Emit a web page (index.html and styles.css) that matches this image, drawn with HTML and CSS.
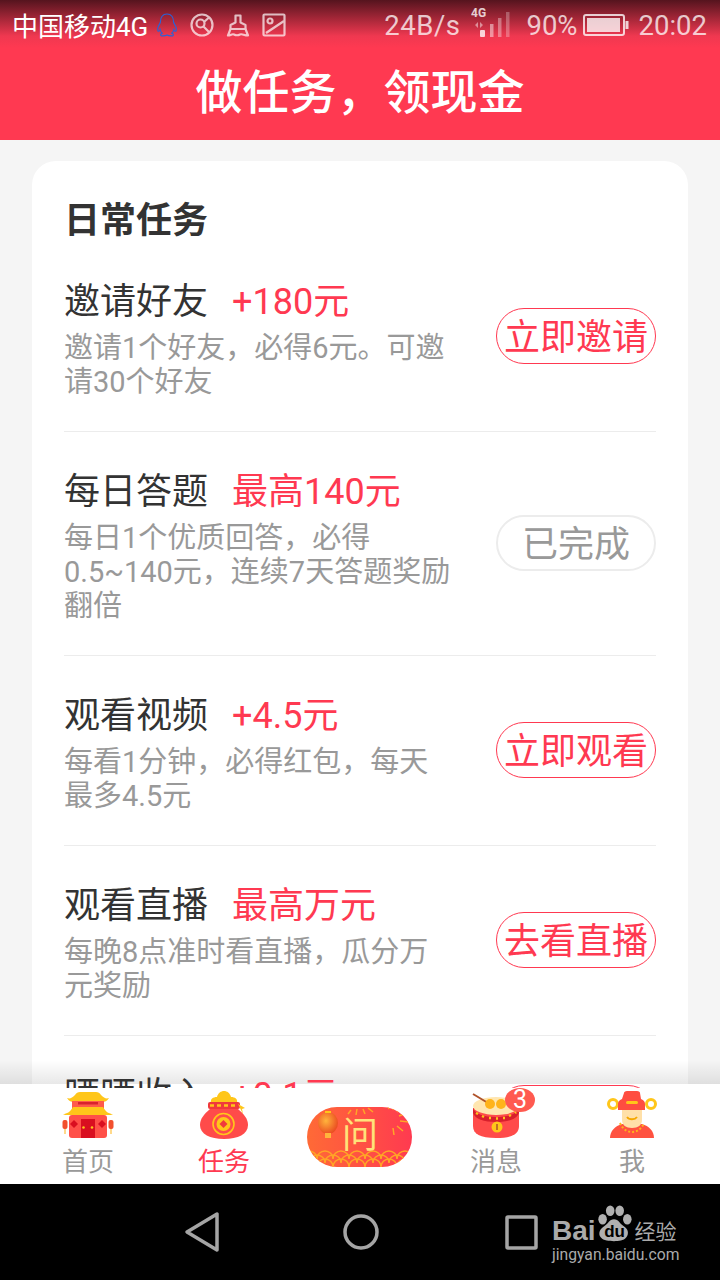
FILE: index.html
```html
<!DOCTYPE html>
<html lang="zh-CN">
<head>
    <meta charset="UTF-8">
    <meta name="viewport" content="width=device-width, initial-scale=1.0">
    <title>做任务，领现金</title>
    <link rel="stylesheet" href="styles.css">
</head>
<body>
    <header class="top">
        <div class="status">
            <div class="status-left">
                <span class="carrier">中国移动4G</span>
                <svg class="ic-qq" width="22" height="24" viewBox="0 0 22 24"><path d="M11 1C6.500 1 4.500 4.500 4.500 8.500C4.500 10 3.500 11 2.500 13C1.500 15 1.300 18 2.300 18.300C3 18.500 3.800 17.300 4.200 16.500C4.500 18 5.200 19.300 6.200 20.200C5 20.800 4.300 21.500 4.800 22.300C5.400 23.200 9 23 11 22C13 23 16.600 23.200 17.200 22.300C17.700 21.500 17 20.800 15.800 20.200C16.800 19.300 17.500 18 17.800 16.500C18.200 17.300 19 18.500 19.700 18.300C20.700 18 20.500 15 19.500 13C18.500 11 17.500 10 17.500 8.500C17.500 4.500 15.500 1 11 1Z" fill="none" stroke="#2b62d6" stroke-width="1.200"/></svg>
                <svg class="ic-dim" width="24" height="24" viewBox="0 0 24 24" fill="none" stroke="#fff" stroke-width="2.200"><circle cx="12" cy="12" r="10.500"/><circle cx="10.500" cy="10.500" r="4"/><path d="M13.500 13.500L19 19M14 9L19 4.500"/></svg>
                <svg class="ic-dim" width="24" height="24" viewBox="0 0 24 24" fill="none" stroke="#fff" stroke-width="2.200" stroke-linejoin="round"><path d="M9.500 2.500h5v7l5 2.500v4H4.500v-4l5-2.500z"/><path d="M4.500 16L2 22.500c3 0 4-2 6-1s4 1 6 0 4 1 8 1L19.500 16"/></svg>
                <svg class="ic-dim" width="24" height="24" viewBox="0 0 24 24" fill="none" stroke="#fff" stroke-width="2.200"><rect x="1.500" y="1.500" width="21" height="21" rx="1"/><circle cx="8" cy="8" r="2.500"/><path d="M4 20L22 8"/></svg>
            </div>
            <div class="status-right">
                <span class="speed">24B/s</span>
                <svg class="signal" width="40" height="32" viewBox="0 0 40 32" fill="#fff">
                    <text x="1" y="12" class="signal-text">4G</text>
                    <path d="M5 20l3-3v6zM10 23l3-3-3-3z" opacity=".6"/>
                    <rect x="10" y="25" width="5" height="7" rx="1"/>
                    <rect x="20" y="19" width="3.500" height="13" opacity=".6"/>
                    <rect x="28" y="13" width="3.500" height="19" opacity=".45"/>
                    <rect x="36" y="7" width="3.500" height="25" opacity=".35"/>
                </svg>
                <span class="batt-pct">90%</span>
                <svg width="46" height="22" viewBox="0 0 46 22" fill="none"><rect x="1" y="1" width="40" height="20" rx="2" stroke="#fff" stroke-width="2"/><rect x="4" y="4" width="33" height="14" fill="#fff"/><rect x="42.500" y="7" width="3" height="8" fill="#fff"/></svg>
                <span class="time">20:02</span>
            </div>
        </div>
        <h1 class="page-title">做任务，领现金</h1>
    </header>

    <main class="content">
        <section class="card">
            <h2 class="card-title">日常任务</h2>

            <div class="task">
                <div class="task-info">
                    <div class="task-head"><span class="task-name">邀请好友</span><span class="task-reward">+180元</span></div>
                    <p class="task-desc">邀请1个好友，必得6元。可邀请30个好友</p>
                </div>
                <button class="task-btn">立即邀请</button>
            </div>

            <div class="task">
                <div class="task-info">
                    <div class="task-head"><span class="task-name">每日答题</span><span class="task-reward">最高140元</span></div>
                    <p class="task-desc">每日1个优质回答，必得0.5~140元，连续7天答题奖励翻倍</p>
                </div>
                <button class="task-btn done">已完成</button>
            </div>

            <div class="task">
                <div class="task-info">
                    <div class="task-head"><span class="task-name">观看视频</span><span class="task-reward">+4.5元</span></div>
                    <p class="task-desc">每看1分钟，必得红包，每天最多4.5元</p>
                </div>
                <button class="task-btn">立即观看</button>
            </div>

            <div class="task">
                <div class="task-info">
                    <div class="task-head"><span class="task-name">观看直播</span><span class="task-reward">最高万元</span></div>
                    <p class="task-desc">每晚8点准时看直播，瓜分万元奖励</p>
                </div>
                <button class="task-btn">去看直播</button>
            </div>

            <div class="task task-cut">
                <div class="task-info">
                    <div class="task-head"><span class="task-name">晒晒收入</span><span class="task-reward">+0.1元</span></div>
                    <p class="task-desc"></p>
                </div>
                <button class="task-btn"></button>
            </div>
        </section>
    </main>

    <nav class="tabbar">
        <a class="tab">
            <svg class="tab-icon" width="56" height="50" viewBox="0 0 56 50">
                <path d="M7 8c3 1 5 0 8-3 1-2 3-3 5-3h16c2 0 4 1 5 3 3 3 5 4 8 3-2 3-4 4-7 4H14c-3 0-5-1-7-4z" fill="#ffc61a"/>
                <rect x="12" y="11" width="32" height="8" fill="#ff5a4a"/>
                <rect x="18" y="12" width="20" height="2.500" fill="#d8222c"/>
                <path d="M3 24c4 0 7-2 10-7h30c3 5 6 7 10 7-1 1-3 1-5 1H8c-2 0-4 0-5-1z" fill="#ffc61a"/>
                <rect x="9" y="25" width="38" height="23" rx="3" fill="#ff5049"/>
                <rect x="21" y="29" width="14" height="19" fill="#d90f20"/>
                <circle cx="23.500" cy="37.500" r="1.300" fill="#ffc61a"/>
                <circle cx="32" cy="37.500" r="1.300" fill="#ffc61a"/>
                <path d="M14 30l4 4-4 4-4-4zM42 30l4 4-4 4-4-4z" fill="#d90f20"/>
                <rect x="2.500" y="30" width="5" height="9" rx="2" fill="#f2502e"/>
                <rect x="48.500" y="30" width="5" height="9" rx="2" fill="#f2502e"/>
                <path d="M5 39v5M51 39v5" stroke="#ffd98a" stroke-width="2"/>
            </svg>
            <span>首页</span>
        </a>
        <a class="tab active">
            <svg class="tab-icon" width="56" height="50" viewBox="0 0 56 50">
                <path d="M15 13c-1-4 2-6 6-6 1-4 4-6 7-6s6 2 7 6c4 0 7 2 6 6z" fill="#ffc61a"/>
                <path d="M14 19C8 24 4 29 4 35c0 9 10 14 24 14s24-5 24-14c0-6-4-11-10-16z" fill="#ff4b4a"/>
                <rect x="12" y="12" width="32" height="7" rx="2" fill="#f03a3c"/>
                <path d="M14 15.500h4M21 15.500h4M28 15.500h4M35 15.500h4" stroke="#ffc61a" stroke-width="2.500"/>
                <path d="M42 14l7 4-3 1 1 5z" fill="#ffc61a"/>
                <circle cx="27.500" cy="34" r="10.500" fill="none" stroke="#ffc61a" stroke-width="1.600"/>
                <circle cx="27.500" cy="34" r="7" fill="#ffc61a"/>
                <path d="M27.500 30l4 4-4 4-4-4z" fill="#f03a3c"/>
            </svg>
            <span>任务</span>
        </a>
        <a class="tab tab-ask">
            <svg width="105" height="60" viewBox="0 0 105 60">
                <defs>
                    <linearGradient id="askBg" x1="0" y1="0" x2="1" y2="0"><stop offset="0" stop-color="#ff6a36"/><stop offset="1" stop-color="#ff3a50"/></linearGradient>
                    <radialGradient id="lantern" cx=".4" cy=".4" r=".7"><stop offset="0" stop-color="#ffb43c"/><stop offset="1" stop-color="#e8401e"/></radialGradient>
                    <clipPath id="askClip"><rect width="105" height="60" rx="30"/></clipPath>
                </defs>
                <rect width="105" height="60" rx="30" fill="url(#askBg)"/>
                <g clip-path="url(#askClip)" fill="none" stroke="#ffa526" stroke-width="1.500">
                    <path d="M-6 60a8 8 0 0 1 16 0a8 8 0 0 1 16 0a8 8 0 0 1 16 0a8 8 0 0 1 16 0a8 8 0 0 1 16 0a8 8 0 0 1 16 0a8 8 0 0 1 16 0"/>
                    <path d="M2 60a8 8 0 0 1 16 0a8 8 0 0 1 16 0a8 8 0 0 1 16 0a8 8 0 0 1 16 0a8 8 0 0 1 16 0a8 8 0 0 1 16 0" transform="translate(0 -4)"/>
                    <path d="M-6 60a8 8 0 0 1 16 0a8 8 0 0 1 16 0a8 8 0 0 1 16 0a8 8 0 0 1 16 0a8 8 0 0 1 16 0a8 8 0 0 1 16 0a8 8 0 0 1 16 0" transform="translate(0 -8)"/>
                    <path d="M82 2l-2-5M86 3l2-6M90 5l5-5M92 9l8-3M93 14l9 1M90 19l6 5M86 21l1 7M44 3l-3 4M50 2l-1 6M56 2l2 5M61 1l5 4"/>
                </g>
                <ellipse cx="21" cy="16" rx="10" ry="11" fill="url(#lantern)"/>
                <rect x="18" y="4" width="6" height="2" fill="#ffc61a"/>
                <rect x="18" y="26" width="6" height="5" fill="#ffb43c"/>
                <text x="53" y="41" class="ask-text">问</text>
            </svg>
        </a>
        <a class="tab">
            <svg class="tab-icon" width="56" height="50" viewBox="0 0 56 50">
                <path d="M5 18h46v18c0 8-7 12-23 12S5 44 5 36z" fill="#ff4b4a"/>
                <ellipse cx="28" cy="16" rx="23" ry="9" fill="#ffe6b0"/>
                <path d="M5 18c2 6 11 9 23 9s21-3 23-9v5c-2 6-11 9-23 9S7 29 5 23z" fill="#d81f2c"/>
                <path d="M8 23l2 1M14 26l2 1M21 28h2M28 28.500h2M35 28h2M41 26l2-1M47 23l1-1" stroke="#ffc61a" stroke-width="2.500"/>
                <path d="M5 4l15 9" stroke="#b0532a" stroke-width="2"/>
                <circle cx="22" cy="14" r="5" fill="#ffb31a"/>
                <circle cx="33" cy="14" r="5" fill="#ffb31a"/>
                <circle cx="29" cy="37" r="5.500" fill="#ffc61a"/>
                <path d="M29 34v6" stroke="#b0532a" stroke-width="1.500"/>
            </svg>
            <span>消息</span>
            <i class="badge">3</i>
        </a>
        <a class="tab">
            <svg class="tab-icon" width="56" height="50" viewBox="0 0 56 50">
                <circle cx="9" cy="14" r="4.500" fill="none" stroke="#ffc61a" stroke-width="3"/>
                <circle cx="47" cy="14" r="4.500" fill="none" stroke="#ffc61a" stroke-width="3"/>
                <path d="M6 48c0-7 5-12 12-14h20c7 2 12 7 12 14z" fill="#ff5240"/>
                <path d="M16 33c3 7 8 9 12 9s9-2 12-9" fill="none" stroke="#ffb31a" stroke-width="2" stroke-dasharray="2 2"/>
                <path d="M18 18h20v12c0 5-4 8-10 8s-10-3-10-8z" fill="#ffe0a8"/>
                <path d="M23 27c2 3 8 3 10 0" fill="none" stroke="#f5a800" stroke-width="1.800"/>
                <path d="M20 3c0-1 1-2 3-2h10c2 0 3 1 3 2l1 6c3 1 4 3 4 5v6H14v-6c0-2 1-4 4-5z" fill="#ff4d40"/>
                <rect x="22" y="11" width="12" height="3" rx="1.500" fill="#ffc61a"/>
            </svg>
            <span>我</span>
        </a>
    </nav>

    <footer class="navbar">
        <svg width="160" height="44" viewBox="0 0 160 44" fill="none" stroke="#a5a5a5" stroke-width="3.500" stroke-linejoin="round"><path d="M96 4v36L66 22z"/></svg>
        <svg width="160" height="44" viewBox="0 0 160 44" fill="none" stroke="#a5a5a5" stroke-width="3.500"><circle cx="80" cy="22" r="16"/></svg>
        <svg width="160" height="44" viewBox="0 0 160 44" fill="none" stroke="#a5a5a5" stroke-width="3.500" stroke-linejoin="round"><rect x="66" y="7" width="29" height="31" rx="1"/></svg>
        <div class="watermark">
            <div class="wm-top">
                <span class="wm-bai">Bai</span>
                <span class="wm-paw">
                    <svg width="38" height="42" viewBox="0 0 40 42" fill="#b0b0b0"><ellipse cx="8" cy="15" rx="4.500" ry="5.500"/><ellipse cx="16" cy="6" rx="4.500" ry="5.500"/><ellipse cx="26" cy="6" rx="4.500" ry="5.500"/><ellipse cx="34" cy="15" rx="4.500" ry="5.500"/><path d="M20 15c5 0 6 5 10 7 5 3 6 8 3 12-3 4-8 4-13 4s-11 0-14-4c-3-4-1-9 4-12 4-2 5-7 10-7z"/></svg>
                    <b class="wm-du">du</b>
                </span>
                <span class="wm-jy">经验</span>
            </div>
            <div class="wm-url">jingyan.baidu.com</div>
        </div>
    </footer>
</body>
</html>
```

FILE: styles.css
```css
* {
    box-sizing: border-box;
}
html, body {
    margin: 0;
    padding: 0;
}
body {
    width: 720px;
    height: 1280px;
    display: flex;
    flex-direction: column;
    overflow: hidden;
    background-color: #f5f5f5;
    font-family: Roboto, "Noto Sans CJK SC", sans-serif;
    color: #333;
}
.top {
    height: 140px;
    flex: none;
    background: linear-gradient(#55141e 0, #ef3850 36px, #ff3951 48px);
    color: white;
}
.status {
    height: 50px;
    padding: 0 13px;
    display: flex;
    align-items: center;
    justify-content: space-between;
    font-size: 26px;
}
.status-left {
    display: flex;
    align-items: center;
    gap: 12px;
}
.carrier {
    margin: -2px -4px 0 -1px;
}
.ic-dim {
    opacity: 0.7;
}
.status-right {
    display: flex;
    align-items: center;
    font-size: 27.5px;
    color: rgba(255, 255, 255, 0.75);
}
.status-right svg {
    opacity: 0.78;
}
.speed {
    letter-spacing: 0.5px;
}
.signal {
    margin: -8px 0 0 10px;
}
.signal-text {
    font-family: Roboto, sans-serif;
    font-size: 12px;
    font-weight: 700;
}
.batt-pct {
    margin: 0 5px 0 16px;
}
.time {
    margin-left: 10px;
}
.page-title {
    margin: 0;
    height: 90px;
    line-height: 86px;
    text-align: center;
    font-size: 47px;
    font-weight: 500;
}
.content {
    flex: 1;
    min-height: 0;
    overflow: hidden;
    padding: 21px 32px 0;
}
.card {
    background-color: white;
    border-radius: 24px;
    padding: 36px 32px 0;
}
.card-title {
    margin: 0;
    height: 45px;
    line-height: 49px;
    font-size: 36px;
    font-weight: 700;
}
.task {
    display: flex;
    align-items: center;
    justify-content: space-between;
    padding: 36px 0 32px;
    border-bottom: 1px solid #ececec;
}
.task-info {
    width: 388px;
}
.task-head {
    display: flex;
    gap: 24px;
    height: 48px;
    line-height: 48px;
    font-size: 36px;
}
.task-reward {
    color: #ff3951;
}
.task-desc {
    margin: 5px 0 0;
    min-height: 34px;
    font-size: 29px;
    line-height: 34px;
    color: #999;
}
.task-btn {
    flex: none;
    width: 160px;
    height: 56px;
    margin-bottom: 5px;
    padding: 3px 0 0;
    border: 1px solid #ff3951;
    border-radius: 28px;
    background: white;
    color: #ff3951;
    font-family: inherit;
    font-size: 36px;
    line-height: 50px;
}
.task-btn.done {
    border: 2px solid #ececec;
    color: #999;
}
/* last row runs under the tab bar, its text stays above the fade */
.task-cut .task-info,
.task-cut .task-btn {
    position: relative;
    z-index: 3;
}
.tabbar {
    position: relative;
    z-index: 2;
    flex: none;
    height: 96px;
    padding: 0 20px;
    display: flex;
    background-color: white;
}
.tabbar::before {
    content: "";
    position: absolute;
    left: 0;
    right: 0;
    top: -28px;
    height: 28px;
    background: linear-gradient(rgba(0, 0, 0, 0) 0, rgba(0, 0, 0, 0.09) 24px, white 24px);
}
.tab {
    position: relative;
    flex: 1;
    display: flex;
    flex-direction: column;
    align-items: center;
    padding-top: 2px;
    font-size: 26px;
    line-height: 34px;
    color: #999;
}
.tab span {
    margin-top: 5px;
}
.tab.active {
    color: #ff3951;
}
.tab-ask {
    padding-top: 19px;
}
.tab-ask svg {
    margin-left: -2px;
}
.tab-icon {
    display: block;
}
.ask-text {
    font-family: "Noto Sans CJK SC", sans-serif;
    font-size: 36px;
    font-weight: 400;
    fill: #ffe27a;
    text-anchor: middle;
}
.badge {
    position: absolute;
    top: 0;
    left: 77px;
    width: 30px;
    height: 24px;
    border-radius: 50%;
    background-color: #ff5a50;
    color: white;
    font-style: normal;
    font-size: 25px;
    line-height: 24px;
    text-align: center;
}
.navbar {
    position: relative;
    flex: none;
    height: 96px;
    padding-left: 2px;
    display: flex;
    justify-content: center;
    align-items: center;
    background-color: black;
}
.watermark {
    position: absolute;
    left: 552px;
    top: 20px;
    width: 130px;
    color: #aaa;
}
.wm-top {
    display: flex;
    align-items: flex-end;
    height: 42px;
}
.wm-bai {
    font-family: "Liberation Sans", sans-serif;
    font-weight: 700;
    font-size: 28px;
    line-height: 30px;
}
.wm-paw {
    position: relative;
    height: 42px;
    margin-left: -1px;
}
.wm-du {
    position: absolute;
    left: 6px;
    bottom: 5px;
    width: 28px;
    text-align: center;
    font-family: "Liberation Sans", sans-serif;
    font-size: 17px;
    line-height: 18px;
    color: black;
}
.wm-jy {
    font-size: 21px;
    line-height: 28px;
    margin-left: 2px;
    white-space: nowrap;
}
.wm-url {
    font-family: Roboto, sans-serif;
    font-size: 15.7px;
    line-height: 18px;
    white-space: nowrap;
}
```
